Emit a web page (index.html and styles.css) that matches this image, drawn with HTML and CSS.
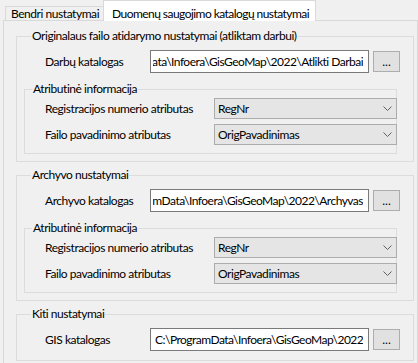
FILE: index.html
```html
<!DOCTYPE html>
<html lang="lt">
<head>
<meta charset="utf-8">
<title>Nustatymai</title>
<link rel="stylesheet" href="styles.css">
</head>
<body>
<div class="tabs">
  <div class="tab">Bendri nustatymai</div>
  <div class="tab active">Duomenų saugojimo katalogų nustatymai</div>
</div>
<div class="panel">
  <fieldset class="group">
    <legend>Originalaus failo atidarymo nustatymai (atliktam darbui)</legend>
    <div class="row">
      <span class="lbl">Darbų katalogas</span>
      <div class="field"><div class="val"><span>C:\ProgramData\Infoera\GisGeoMap\2022\Atlikti Darbai</span></div></div>
      <button class="btn">...</button>
    </div>
    <fieldset class="group inner">
      <legend>Atributinė informacija</legend>
      <div class="crow">
        <span class="lbl">Registracijos numerio atributas</span>
        <div class="combo"><span>RegNr</span><svg class="chev" width="9" height="5" viewBox="0 0 9 5"><polyline points="0.5,0.5 4.5,4.5 8.5,0.5" fill="none" stroke="#606060" stroke-width="1"/></svg></div>
      </div>
      <div class="crow">
        <span class="lbl">Failo pavadinimo atributas</span>
        <div class="combo"><span>OrigPavadinimas</span><svg class="chev" width="9" height="5" viewBox="0 0 9 5"><polyline points="0.5,0.5 4.5,4.5 8.5,0.5" fill="none" stroke="#606060" stroke-width="1"/></svg></div>
      </div>
    </fieldset>
  </fieldset>

  <fieldset class="group">
    <legend>Archyvo nustatymai</legend>
    <div class="row">
      <span class="lbl">Archyvo katalogas</span>
      <div class="field"><div class="val"><span>C:\ProgramData\Infoera\GisGeoMap\2022\Archyvas</span></div></div>
      <button class="btn">...</button>
    </div>
    <fieldset class="group inner">
      <legend>Atributinė informacija</legend>
      <div class="crow">
        <span class="lbl">Registracijos numerio atributas</span>
        <div class="combo"><span>RegNr</span><svg class="chev" width="9" height="5" viewBox="0 0 9 5"><polyline points="0.5,0.5 4.5,4.5 8.5,0.5" fill="none" stroke="#606060" stroke-width="1"/></svg></div>
      </div>
      <div class="crow">
        <span class="lbl">Failo pavadinimo atributas</span>
        <div class="combo"><span>OrigPavadinimas</span><svg class="chev" width="9" height="5" viewBox="0 0 9 5"><polyline points="0.5,0.5 4.5,4.5 8.5,0.5" fill="none" stroke="#606060" stroke-width="1"/></svg></div>
      </div>
    </fieldset>
  </fieldset>

  <fieldset class="group last">
    <legend>Kiti nustatymai</legend>
    <div class="row">
      <span class="lbl">GIS katalogas</span>
      <div class="field"><div class="val start"><span>C:\ProgramData\Infoera\GisGeoMap\2022</span></div></div>
      <button class="btn">...</button>
    </div>
  </fieldset>
</div>
</body>
</html>
```

FILE: styles.css
```css
* { box-sizing: border-box; }
html, body {
  margin: 0;
  padding: 0;
  background: #f0f0f0;
  width: 418px;
  height: 363px;
  overflow: hidden;
}
body {
  font-family: Lato, "Noto Sans", sans-serif;
  font-size: 12px;
  letter-spacing: -0.45px;
  color: #000;
}
.tabs {
  display: flex;
  align-items: flex-end;
  height: 21px;
  padding-left: 5px;
  position: relative;
  z-index: 1;
}
.tab {
  height: 14px;
  line-height: 13px;
  padding: 0 4px 0 5px;
  border: 1px solid #d9d9d9;
  border-bottom: none;
  margin-bottom: 1px;
  background: #f0f0f0;
  white-space: nowrap;
}
.tab.active {
  height: 21px;
  padding: 0 6px 0 8px;
  margin-bottom: 0;
  margin-left: -1px;
  background: #ffffff;
  border-color: #d9d9d9;
  line-height: 25px;
  letter-spacing: -0.55px;
}
.panel {
  margin-left: 3px;
  margin-top: -1px;
  width: 415px;
  height: 343px;
  border: 1px solid #d9d9d9;
  border-bottom: none;
  padding: 8px 3px 0 12px;
}
fieldset.group {
  margin: 0 0 6px 0;
  padding: 7px 16px 7px 7px;
  border: 1px solid #dcdcdc;
  min-width: 0;
}
fieldset.group > legend {
  padding: 0 1px;
  margin-left: 7px;
  line-height: 14px;
  height: 14px;
}
fieldset.inner {
  margin: 9px 0 0 0;
  padding: 2px 8px 8px 0;
}
fieldset.last {
  padding-bottom: 9px;
}
.row {
  display: grid;
  grid-template-columns: 101px 219px 27px;
  column-gap: 4px;
  align-items: center;
  padding-left: 21px;
  height: 23px;
}
.crow {
  display: grid;
  grid-template-columns: 169px 183px;
  align-items: center;
  padding-left: 20px;
  height: 21px;
}
.crow + .crow { margin-top: 5px; }
.lbl { white-space: nowrap; }
.field {
  height: 23px;
  border: 1px solid #7a7a7a;
  background: #fff;
  padding: 0 5px 0 2px;
  display: flex;
  align-items: center;
}
.val {
  flex: 1;
  overflow: hidden;
  display: flex;
  justify-content: flex-end;
  white-space: nowrap;
  letter-spacing: -0.52px;
}
.val.start { justify-content: flex-start; padding-left: 2px; }
.btn {
  height: 21px;
  width: 27px;
  margin: 0;
  padding: 0 0 2px 0;
  border: 1px solid #adadad;
  background: #e1e1e1;
  font: inherit;
  letter-spacing: 0;
  line-height: 14px;
  display: flex;
  align-items: flex-end;
  justify-content: center;
}
.combo {
  height: 21px;
  border: 1px solid #acacac;
  background: #e5e5e5;
  display: flex;
  align-items: center;
  justify-content: space-between;
  padding: 0 4px 0 3px;
}
.chev { display: block; }
```
